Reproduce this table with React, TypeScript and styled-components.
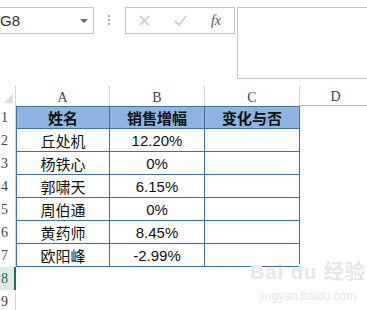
import React from "react";
import styled, { createGlobalStyle } from "styled-components";

const GlobalStyle = createGlobalStyle`
  html, body {
    margin: 0;
    padding: 0;
    background: #fff;
    overflow: hidden;
  }
  body {
    width: 367px;
    height: 310px;
    font-family: "Liberation Sans", "Noto Sans CJK SC", sans-serif;
  }
`;

const Page = styled.div`
  position: relative;
  width: 367px;
  height: 310px;
  overflow: hidden;
`;

const FormulaBar = styled.div`
  display: flex;
  align-items: flex-start;
  height: 86px;
  padding-top: 7px;
  box-sizing: border-box;
`;

const NameBox = styled.div`
  display: flex;
  align-items: center;
  justify-content: space-between;
  width: 103px;
  height: 27px;
  margin-left: -9px;
  padding: 0 5px 0 8px;
  box-sizing: border-box;
  border: 1px solid #c6c6c6;
  color: #333;
  font-size: 15px;
`;

const Caret = styled.span`
  width: 0;
  height: 0;
  border-left: 4px solid transparent;
  border-right: 4px solid transparent;
  border-top: 4px solid #6a6a6a;
`;

const Grip = styled.div`
  display: flex;
  flex-direction: column;
  gap: 2px;
  margin: 8px 15px 0 14px;
  span {
    width: 2px;
    height: 2px;
    background: #b0b0b0;
  }
`;

const ButtonBox = styled.div`
  display: flex;
  align-items: center;
  width: 110px;
  height: 27px;
  box-sizing: border-box;
  border: 1px solid #c6c6c6;
`;

const ToolButton = styled.div<{ $dark?: boolean }>`
  flex: 1;
  display: flex;
  align-items: center;
  justify-content: center;
  color: ${(p) => (p.$dark ? "#555" : "#c4c4c4")};
`;

const Fx = styled.span`
  font-family: "Liberation Serif", serif;
  font-style: italic;
  font-size: 14px;
  color: #555;
`;

const FormulaInput = styled.div`
  flex: 1;
  height: 72px;
  margin-left: 2px;
  margin-right: -4px;
  border: 1px solid #c6c6c6;
  box-sizing: border-box;
`;

const Sheet = styled.div`
  display: grid;
  grid-template-columns: 16px 94px 95px 95px 72px;
  grid-template-rows: 20px;
  grid-auto-rows: 23px;
`;

const Corner = styled.div`
  position: relative;
  border-right: 1px solid #d4d4d4;
  box-sizing: border-box;
  &::after {
    content: "";
    position: absolute;
    right: 2px;
    bottom: 3px;
    width: 0;
    height: 0;
    border-left: 9px solid transparent;
    border-bottom: 9px solid #dcdcdc;
  }
`;

const ColHead = styled.div<{ $underline?: boolean }>`
  display: flex;
  align-items: center;
  justify-content: center;
  padding-top: 3px;
  box-sizing: border-box;
  border-right: 1px solid #d4d4d4;
  border-bottom: ${(p) => (p.$underline ? "1px solid #b9b9b9" : "none")};
  font-family: "Liberation Serif", "DejaVu Serif", serif;
  font-size: 14px;
  color: #444;
`;

const RowHead = styled.div<{ $active?: boolean }>`
  display: flex;
  align-items: center;
  padding-left: 1px;
  box-sizing: border-box;
  border-right: ${(p) => (p.$active ? "2px solid #217346" : "1px solid #d4d4d4")};
  background: ${(p) => (p.$active ? "#e2e8e4" : "#fff")};
  color: ${(p) => (p.$active ? "#217346" : "#444")};
  font-family: "Liberation Serif", "DejaVu Serif", serif;
  font-size: 14px;
`;

const Cell = styled.div<{ $head?: boolean; $first?: boolean; $top?: boolean }>`
  display: flex;
  align-items: center;
  justify-content: center;
  box-sizing: border-box;
  border-right: 1px solid #41729b;
  border-bottom: 1px solid #41729b;
  border-left: ${(p) => (p.$first ? "1px solid #41729b" : "none")};
  border-top: ${(p) => (p.$top ? "1px solid #41729b" : "none")};
  background: ${(p) => (p.$head ? "#8db4e2" : "#fff")};
  color: #111;
  font-family: "Liberation Sans", "Noto Sans CJK SC", sans-serif;
  font-size: 15px;
  font-weight: ${(p) => (p.$head ? 700 : 400)};
`;

const Blank = styled.div``;

const Watermark = styled.div`
  position: absolute;
  left: 250px;
  top: 262px;
  display: flex;
  flex-direction: column;
  align-items: center;
  color: #e6e6e6;
  font-family: "Liberation Sans", "Noto Sans CJK SC", sans-serif;
  line-height: 1;
  pointer-events: none;
`;

const MarkTitle = styled.div`
  font-size: 20px;
  font-weight: 700;
  letter-spacing: 1px;
`;

const MarkUrl = styled.div`
  margin-top: 8px;
  font-size: 12px;
`;

const rows = [
  ["丘处机", "12.20%"],
  ["杨铁心", "0%"],
  ["郭啸天", "6.15%"],
  ["周伯通", "0%"],
  ["黄药师", "8.45%"],
  ["欧阳峰", "-2.99%"],
];

export default function App() {
  return (
    <Page>
      <GlobalStyle />
      <FormulaBar>
        <NameBox>
          <span>G8</span>
          <Caret />
        </NameBox>
        <Grip>
          <span />
          <span />
          <span />
        </Grip>
        <ButtonBox>
          <ToolButton>
            <svg width="11" height="11" viewBox="0 0 11 11">
              <path d="M1 1 L10 10 M10 1 L1 10" stroke="currentColor" strokeWidth="1.3" />
            </svg>
          </ToolButton>
          <ToolButton>
            <svg width="13" height="11" viewBox="0 0 13 11">
              <path d="M1 6 L5 10 L12 1" stroke="currentColor" strokeWidth="1.4" fill="none" />
            </svg>
          </ToolButton>
          <ToolButton $dark>
            <Fx>fx</Fx>
          </ToolButton>
        </ButtonBox>
        <FormulaInput />
      </FormulaBar>

      <Sheet>
        <Corner />
        <ColHead>A</ColHead>
        <ColHead>B</ColHead>
        <ColHead>C</ColHead>
        <ColHead $underline>D</ColHead>

        <RowHead>1</RowHead>
        <Cell $head $first $top>姓名</Cell>
        <Cell $head $top>销售增幅</Cell>
        <Cell $head $top>变化与否</Cell>
        <Blank />

        {rows.map(([name, value], i) => (
          <React.Fragment key={name}>
            <RowHead>{i + 2}</RowHead>
            <Cell $first>{name}</Cell>
            <Cell>{value}</Cell>
            <Cell />
            <Blank />
          </React.Fragment>
        ))}

        <RowHead $active>8</RowHead>
        <Blank />
        <Blank />
        <Blank />
        <Blank />
        <RowHead>9</RowHead>
      </Sheet>

      <Watermark>
        <MarkTitle>Bai du 经验</MarkTitle>
        <MarkUrl>jingyan.baidu.com</MarkUrl>
      </Watermark>
    </Page>
  );
}
